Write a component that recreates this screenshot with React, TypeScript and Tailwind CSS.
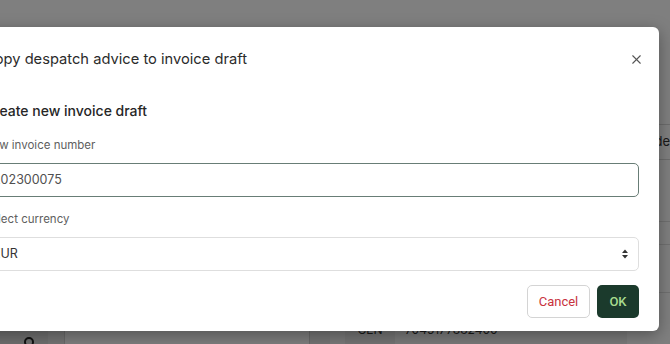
import { X } from "lucide-react";

function SelectArrows() {
  return (
    <svg width="8" height="12" viewBox="0 0 8 12" className="text-[#333]">
      <path d="M4 1.5 L7 5 H1 Z" fill="currentColor" />
      <path d="M4 10.5 L7 7 H1 Z" fill="currentColor" />
    </svg>
  );
}

function Backdrop() {
  return (
    <div className="flex h-full w-full bg-white">
      <div className="flex w-[659px] flex-col">
        <div className="h-[322px]" />
        <div className="flex h-[22px] border-t border-[#d9d9d9] text-[12px] text-[#333]">
          <div className="flex w-[48px] justify-end bg-[#dcdcdc] pr-[14px] pt-[14px]">
            <div className="h-[10px] w-[10px] rounded-full border-2 border-[#222]" />
          </div>
          <div className="w-[17px] border-r border-[#d0d0d0] bg-[#e6e6e6]" />
          <div className="w-[245px] border-r border-[#d0d0d0] bg-[#fafafa]" />
          <div className="w-[20px] bg-[#e6e6e6]" />
          <div className="w-[15px] bg-[#f0f0f0]" />
          <div className="flex w-[50px] justify-center bg-[#e6e6e6] pt-[1px] leading-[12px]">
            CEN
          </div>
          <div className="flex-1 bg-[#f2f2f2] pl-[10px] pt-[1px] leading-[12px]">
            7045177882400
          </div>
        </div>
      </div>
      <div className="flex flex-1 flex-col">
        <div className="h-[124px]" />
        <div className="flex h-[36px] items-center whitespace-nowrap border-y border-[#d8d8d8] pl-[1px] text-[13px] text-[#333]">
          e code
        </div>
        <div className="h-[62px] border-b border-[#e0e0e0]" />
        <div className="h-[23px] border-b border-[#e0e0e0]" />
        <div className="h-[48px] border-b border-[#e0e0e0]" />
      </div>
    </div>
  );
}

export default function App() {
  return (
    <div
      className="relative h-[344px] w-[670px] overflow-hidden"
      style={{ fontFamily: "Inter, 'Noto Sans', sans-serif" }}
    >
      <Backdrop />
      <div className="absolute inset-0 bg-black/50" />
      <div className="absolute left-[-36px] top-[27px] w-[695px] rounded-[6px] bg-white px-[20px] pb-[13px] pt-[20px] shadow-[0_4px_16px_rgba(0,0,0,0.35)]">
        <div className="flex h-[24px] items-center justify-between">
          <h2 className="text-[14.7px] font-normal leading-6 text-[#2b2b2b]">
            Copy despatch advice to invoice draft
          </h2>
          <button className="mr-[-5px] text-[#555]">
            <X size={15} strokeWidth={1.75} />
          </button>
        </div>

        <h3 className="mt-[30px] text-[14px] font-medium leading-5 text-[#262626]">
          Create new invoice draft
        </h3>

        <label className="mt-[15px] block text-[11.5px] leading-[18px] text-[#606060]">
          New invoice number
        </label>
        <div className="mt-[9px] flex h-[34px] items-center rounded-[5px] border border-[#687d76] px-[8px] text-[12.5px] text-[#505050]">
          202300075
        </div>

        <label className="mt-[13px] block text-[11.5px] leading-[18px] text-[#606060]">
          Select currency
        </label>
        <div className="mt-[9px] flex h-[34px] items-center justify-between rounded-[5px] border border-[#dedede] pl-[8px] pr-[9px] text-[12.5px] text-[#333]">
          <span>EUR</span>
          <SelectArrows />
        </div>

        <div
          className="mt-[14px] flex justify-end gap-[7px] text-[13px]"
          style={{ fontFamily: "Roboto, 'Liberation Sans', sans-serif" }}
        >
          <button className="h-[33px] w-[63px] rounded-[5px] border border-[#d4d4d4] bg-white text-[#c8323d]">
            Cancel
          </button>
          <button className="h-[33px] w-[42px] rounded-[5px] bg-[#1b3a2c] font-medium text-[#a8dc8e]">
            OK
          </button>
        </div>
      </div>
    </div>
  );
}
